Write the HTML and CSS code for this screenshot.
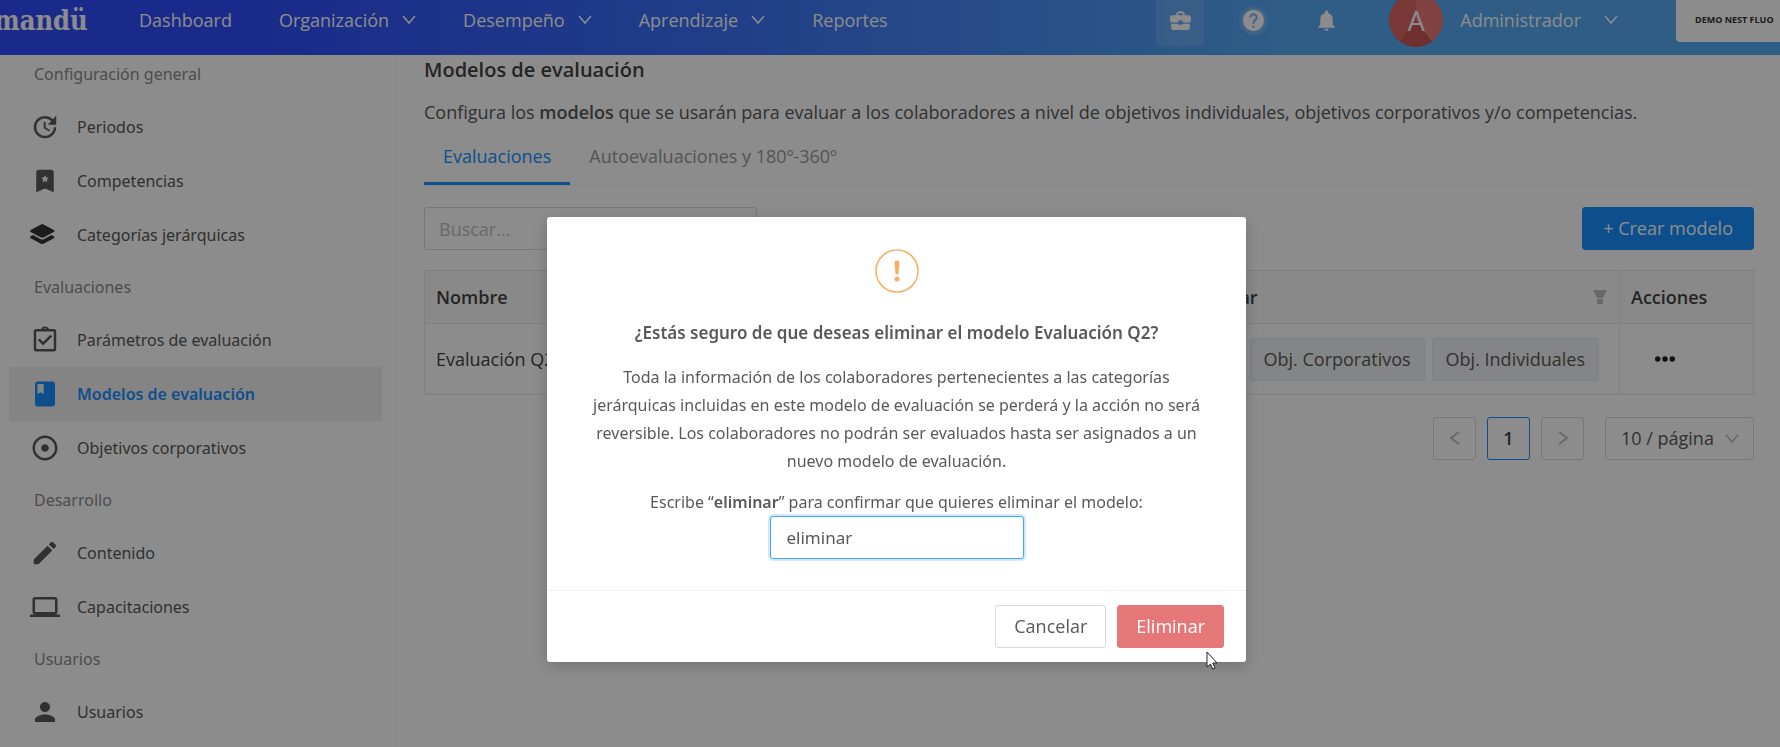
FILE: index.html
```html
<!DOCTYPE html>
<html lang="es">
<head>
  <meta charset="UTF-8">
  <title>Modelos de evaluación</title>
  <link rel="stylesheet" href="styles.css">
</head>
<body>
  <header class="header">
    <a href="#" class="logo">mandü</a>
    <nav class="nav">
      <a href="#">Dashboard</a>
      <a href="#">Organización <svg class="chevron" viewBox="0 0 14 10"><path d="M1 1l6 7 6-7"/></svg></a>
      <a href="#">Desempeño <svg class="chevron" viewBox="0 0 14 10"><path d="M1 1l6 7 6-7"/></svg></a>
      <a href="#">Aprendizaje <svg class="chevron" viewBox="0 0 14 10"><path d="M1 1l6 7 6-7"/></svg></a>
      <a href="#">Reportes</a>
    </nav>
    <div class="tools">
      <button type="button" class="tool tool-active" aria-label="Empresa">
        <svg viewBox="0 0 24 24"><path d="M10 16v-1H3v4c0 1.100.9 2 2 2h14c1.100 0 2-.9 2-2v-4h-7v1h-4zm10-9h-4V5l-2-2h-4L8 5v2H4c-1.100 0-2 .9-2 2v3c0 1.110.89 2 2 2h6v-2h4v2h6c1.100 0 2-.9 2-2V9c0-1.100-.9-2-2-2zm-6 0h-4V5h4v2z"/></svg>
      </button>
      <button type="button" class="tool" aria-label="Ayuda">
        <svg class="glow" viewBox="0 0 24 24"><path d="M12 2C6.480 2 2 6.480 2 12s4.480 10 10 10 10-4.480 10-10S17.520 2 12 2zm1 17h-2v-2h2v2zm2.070-7.750l-.9.920C13.450 12.900 13 13.500 13 15h-2v-.5c0-1.100.45-2.100 1.170-2.830l1.240-1.260c.37-.36.59-.86.59-1.410 0-1.100-.9-2-2-2s-2 .9-2 2H8c0-2.210 1.790-4 4-4s4 1.790 4 4c0 .88-.36 1.680-.93 2.250z"/></svg>
      </button>
      <button type="button" class="tool" aria-label="Notificaciones">
        <svg viewBox="0 0 24 24"><path d="M12 22c1.100 0 2-.9 2-2h-4c0 1.100.89 2 2 2zm6-6v-5c0-3.070-1.640-5.640-4.500-6.320V4c0-.83-.67-1.500-1.500-1.500s-1.500.67-1.500 1.500v.68C7.630 5.360 6 7.920 6 11v5l-2 2v1h16v-1l-2-2z"/></svg>
      </button>
    </div>
    <a href="#" class="user">
      <span class="avatar">A</span>
      <span>Administrador</span>
      <svg class="chevron" viewBox="0 0 14 10"><path d="M1 1l6 7 6-7"/></svg>
    </a>
    <div class="company">DEMO NEST FLUO</div>
  </header>

  <div class="layout">
    <aside class="sidebar">
      <h3>Configuración general</h3>
      <a href="#"><svg viewBox="0 0 24 24"><path d="M21 10.120h-6.780l2.740-2.820c-2.730-2.700-7.150-2.800-9.880-.1-2.730 2.710-2.730 7.080 0 9.790s7.150 2.710 9.880 0C18.320 15.650 19 14.080 19 12.100h2c0 1.980-.88 4.550-2.640 6.290-3.510 3.480-9.210 3.480-12.720 0-3.500-3.470-3.530-9.110-.02-12.580s9.140-3.470 12.650 0L21 3v7.120zM12.500 8v4.250l3.500 2.080-.72 1.210L11 13V8h1.500z"/></svg>Periodos</a>
      <a href="#"><svg viewBox="0 0 24 24"><path fill-rule="evenodd" d="M17 3H7c-1.100 0-2 .9-2 2v16l7-3 7 3V5c0-1.100-.9-2-2-2zM12 7.200l.9 2 2.200.2-1.700 1.500.5 2.100-1.900-1.100-1.900 1.100.5-2.100-1.700-1.500 2.200-.2z"/></svg>Competencias</a>
      <a href="#"><svg class="dark" viewBox="0 0 24 24"><path d="M8.800 1.500q1-.5 2 0l8.200 4.400q1.200.8 0 1.600l-8.200 4.400q-1 .5-2 0L.6 7.500q-1.200-.8 0-1.600zM.6 11l1.800-1 6.200 3.300q1.200.5 2.400 0l6.200-3.300 1.800 1q1.200.8 0 1.600l-8.200 4.300q-1 .5-2 0L.6 12.600q-1.200-.8 0-1.600z" transform="translate(0 2)"/></svg>Categorías jerárquicas</a>
      <h3>Evaluaciones</h3>
      <a href="#"><svg viewBox="0 0 24 24"><path d="M7 11.500l3.500 3.500L17 8.500M5 4.200h14q1 0 1 1v14q0 1-1 1H5q-1 0-1-1v-14q0-1 1-1z" fill="none" stroke="currentColor" stroke-width="2"/><path fill-rule="evenodd" d="M8.500 4.500C9 0 15 0 15.500 4.500zM12 2.500a.8.8 0 100 1.600.8.8 0 000-1.600z"/></svg>Parámetros de evaluación</a>
      <a href="#" class="active"><svg viewBox="0 0 24 24"><path fill-rule="evenodd" d="M18 2H6c-1.100 0-2 .9-2 2v16c0 1.100.9 2 2 2h12c1.100 0 2-.9 2-2V4c0-1.100-.9-2-2-2zM6 4h5v8l-2.500-1.500L6 12V4z"/></svg>Modelos de evaluación</a>
      <a href="#"><svg viewBox="0 0 24 24"><path d="M12 2C6.490 2 2 6.490 2 12s4.490 10 10 10 10-4.490 10-10S17.510 2 12 2zm0 18c-4.410 0-8-3.590-8-8s3.590-8 8-8 8 3.590 8 8-3.590 8-8 8zm3-8c0 1.660-1.340 3-3 3s-3-1.340-3-3 1.340-3 3-3 3 1.340 3 3z"/></svg>Objetivos corporativos</a>
      <h3>Desarrollo</h3>
      <a href="#"><svg viewBox="0 0 24 24"><path d="M3 17.250V21h3.750L17.810 9.940l-3.750-3.750L3 17.250zM20.710 7.040c.39-.39.39-1.020 0-1.410l-2.340-2.340c-.39-.39-1.020-.39-1.410 0l-1.830 1.830 3.750 3.750 1.830-1.830z"/></svg>Contenido</a>
      <a href="#"><svg viewBox="0 0 24 24"><path d="M20 18c1.100 0 2-.9 2-2V6c0-1.100-.9-2-2-2H4c-1.100 0-2 .9-2 2v10c0 1.100.9 2 2 2H0v2h24v-2h-4zM4 6h16v10H4V6z"/></svg>Capacitaciones</a>
      <h3>Usuarios</h3>
      <a href="#"><svg viewBox="0 0 24 24"><path d="M12 12c2.210 0 4-1.790 4-4s-1.790-4-4-4-4 1.790-4 4 1.790 4 4 4zm0 2c-2.670 0-8 1.340-8 4v2h16v-2c0-2.660-5.330-4-8-4z"/></svg>Usuarios</a>
    </aside>

    <main class="content">
      <h1>Modelos de evaluación</h1>
      <p class="description">Configura los <b>modelos</b> que se usarán para evaluar a los colaboradores a nivel de objetivos individuales, objetivos corporativos y/o competencias.</p>
      <div class="tabs">
        <a href="#" class="tab tab-active">Evaluaciones</a>
        <a href="#" class="tab">Autoevaluaciones y 180º-360º</a>
      </div>
      <div class="toolbar">
        <input type="text" class="search" placeholder="Buscar..." aria-label="Buscar">
        <button type="button" class="btn btn-primary">+ Crear modelo</button>
      </div>
      <table class="table">
        <thead>
          <tr>
            <th>Nombre</th>
            <th class="col-variables">
              <div class="th-filter">
                <span>Variables a evaluar</span>
                <svg viewBox="0 0 14 14"><path d="M0 0h14l-4 8H4zM4 9h6v5H4z"/></svg>
              </div>
            </th>
            <th class="col-actions">Acciones</th>
          </tr>
        </thead>
        <tbody>
          <tr>
            <td>Evaluación Q2</td>
            <td>
              <div class="tags">
                <span class="tag">Obj. Corporativos</span>
                <span class="tag">Obj. Individuales</span>
              </div>
            </td>
            <td>
              <button type="button" class="more" aria-label="Más acciones">
                <svg viewBox="0 0 22 6"><circle cx="3" cy="3" r="3"/><circle cx="11" cy="3" r="3"/><circle cx="19" cy="3" r="3"/></svg>
              </button>
            </td>
          </tr>
        </tbody>
      </table>
      <div class="pagination">
        <button type="button" class="page" aria-label="Anterior"><svg viewBox="0 0 10 14"><path d="M9 1L1 7l8 6"/></svg></button>
        <button type="button" class="page page-active">1</button>
        <button type="button" class="page" aria-label="Siguiente"><svg viewBox="0 0 10 14"><path d="M1 1l8 6-8 6"/></svg></button>
        <div class="page-size">
          <select aria-label="Resultados por página">
            <option>10 / página</option>
          </select>
          <svg class="chevron" viewBox="0 0 14 10"><path d="M1 1l6 7 6-7"/></svg>
        </div>
      </div>
    </main>
  </div>

  <div class="overlay">
    <form class="modal" role="dialog" aria-modal="true" aria-labelledby="modal-title">
      <div class="modal-body">
        <svg class="warning" viewBox="0 0 44 44"><circle cx="22" cy="22" r="21"/><path d="M19.500 13.500q0-2 2.500-2t2.500 2l-1 11q-.2 1-1.500 1t-1.500-1z"/><path d="M22 27.500a2.500 2.500 0 100 5 2.500 2.500 0 000-5z"/></svg>
        <h2 id="modal-title">¿Estás seguro de que deseas eliminar el modelo Evaluación Q2?</h2>
        <p>Toda la información de los colaboradores pertenecientes a las categorías jerárquicas incluidas en este modelo de evaluación se perderá y la acción no será reversible. Los colaboradores no podrán ser evaluados hasta ser asignados a un nuevo modelo de evaluación.</p>
        <label for="confirm">Escribe “<b>eliminar</b>” para confirmar que quieres eliminar el modelo:</label>
        <input type="text" id="confirm" class="confirm" value="eliminar">
      </div>
      <div class="modal-footer">
        <button type="button" class="btn">Cancelar</button>
        <button type="submit" class="btn btn-danger">Eliminar</button>
      </div>
      <svg class="cursor" viewBox="0 0 12 19"><path d="M1 1v15l3.500-3 2.200 5 2.300-1-2.200-5H11z"/></svg>
    </form>
  </div>
</body>
</html>
```

FILE: styles.css
```css
* {
  box-sizing: border-box;
}
body {
  margin: 0;
  height: 100vh;
  overflow: hidden;
  font-family: "Open Sans", "Noto Sans", sans-serif;
  font-size: 18px;
  line-height: 27px;
  color: #595959;
  background: #fff;
}
a {
  color: inherit;
  text-decoration: none;
}
button, input, select {
  font: inherit;
  color: inherit;
}
button {
  cursor: pointer;
}
svg {
  fill: currentColor;
  flex: none;
}
b {
  font-weight: 600;
}
.chevron {
  width: 14px;
  height: 10px;
  fill: none;
  stroke: currentColor;
  stroke-width: 1.5;
}

/* header */
.header {
  display: flex;
  align-items: center;
  height: 55px;
  padding-bottom: 15px;
  color: #fff;
  background: linear-gradient(90deg, #304efb 0%, #304efb 15%, #3c74f8 42%, #56a9f5 72%, #56a9f5 100%);
}
.logo {
  width: 138px;
  margin-left: -6px;
  font-family: "DejaVu Serif Condensed", "DejaVu Serif", serif;
  font-size: 27px;
  font-weight: bold;
}
.nav {
  display: flex;
  flex: 1;
  gap: 47px;
  padding-left: 7px;
}
.nav a {
  display: flex;
  align-items: center;
  gap: 13px;
}
.tools {
  display: flex;
  gap: 25px;
}
.tool {
  display: flex;
  align-items: center;
  justify-content: center;
  width: 48px;
  height: 52px;
  padding: 0;
  border: none;
  border-radius: 4px;
  background: none;
}
.tool-active {
  background: rgba(255, 255, 255, 0.12);
}
.tool svg {
  width: 25px;
  height: 25px;
}
.glow {
  border-radius: 50%;
  background: rgba(255, 255, 255, 0.2);
  box-shadow: 0 0 4px rgba(255, 255, 255, 0.4);
}
.user {
  display: flex;
  align-items: center;
  gap: 17px;
  margin: 0 58px 0 39px;
}
.user .chevron {
  margin-left: 6px;
}
.avatar {
  display: flex;
  align-items: center;
  justify-content: center;
  width: 54px;
  height: 54px;
  border-radius: 50%;
  font-size: 27px;
  background: conic-gradient(#ea7a78 0 40%, #c85652 40% 60%, #dd6763 60% 100%);
}
.company {
  width: 104px;
  height: 44px;
  padding-left: 19px;
  border-radius: 4px 0 0 4px;
  font-size: 9px;
  font-weight: 700;
  line-height: 44px;
  white-space: nowrap;
  color: #333;
  background: #fff;
}

/* sidebar */
.layout {
  display: flex;
  min-height: calc(100vh - 55px);
}
.sidebar {
  width: 397px;
  padding: 0 14px 0 9px;
  font-family: "Noto Sans", sans-serif;
  font-size: 16px;
  border-right: 1px solid #f0f0f0;
}
.sidebar h3 {
  margin: 0;
  padding: 12px 25px;
  font-size: 16px;
  font-weight: 400;
  color: #8c8c8c;
}
.sidebar h3:first-child {
  padding-top: 6px;
}
.sidebar a {
  display: flex;
  align-items: center;
  gap: 17px;
  height: 54px;
  padding-left: 21px;
}
.sidebar svg {
  width: 30px;
  height: 30px;
}
.sidebar .dark {
  color: #333;
}
.sidebar .active {
  font-weight: 600;
  color: #1890ff;
  background: #f0f0f0;
}

/* content */
.content {
  flex: 1;
  padding: 1px 26px 0 27px;
}
h1 {
  margin: 0;
  font-size: 20px;
  font-weight: 600;
  color: #434343;
}
.description {
  margin: 16px 0 7px;
}
.tabs {
  display: flex;
  border-bottom: 1px solid #f0f0f0;
}
.tab {
  padding: 10px 19px 12px;
  color: #999;
}
.tab-active {
  color: #1890ff;
  border-bottom: 3px solid #1890ff;
}
.toolbar {
  display: flex;
  justify-content: space-between;
  margin: 21px 0 20px;
}
.search {
  width: 333px;
  height: 43px;
  padding: 0 14px;
  border: 1px solid #d9d9d9;
  border-radius: 3px;
  background: #fff;
}
.search::placeholder {
  color: #bfbfbf;
}
.btn {
  height: 43px;
  padding: 0 18px;
  border: 1px solid #d9d9d9;
  border-radius: 3px;
  background: #fff;
}
.btn-primary {
  padding: 0 20px;
  color: #fff;
  border-color: #1890ff;
  background: #1890ff;
}
.btn-danger {
  color: #fff;
  border-color: #e57779;
  background: #e57779;
}
.table {
  width: 100%;
  table-layout: fixed;
  border: 1px solid #e8e8e8;
  border-collapse: collapse;
}
.table th {
  height: 53px;
  padding: 0 12px 0 11px;
  text-align: left;
  font-weight: 600;
  color: #434343;
  background: #fafafa;
  border-bottom: 1px solid #e8e8e8;
}
.table td {
  height: 71px;
  padding: 0 12px 0 11px;
  color: #434343;
}
.table .col-variables {
  width: 538px;
}
.table .col-actions {
  width: 134px;
}
.table th:last-child, .table td:last-child {
  border-left: 1px solid #e8e8e8;
}
.th-filter {
  display: flex;
  align-items: center;
  justify-content: space-between;
}
.th-filter svg {
  width: 14px;
  height: 14px;
  color: #bfbfbf;
}
.tags {
  display: flex;
  justify-content: flex-end;
  gap: 7px;
  padding-right: 8px;
}
.tag {
  padding: 7px 13px;
  border: 1px solid #e4e7f0;
  border-radius: 3px;
  color: #595959;
  background: #f0f2f5;
}
.more {
  display: flex;
  padding: 0 24px;
  border: none;
  color: #222;
  background: none;
}
.more svg {
  width: 20px;
  height: 6px;
}
.pagination {
  display: flex;
  justify-content: flex-end;
  gap: 11px;
  margin-top: 22px;
}
.page {
  width: 43px;
  height: 43px;
  padding: 0;
  border: 1px solid #d9d9d9;
  border-radius: 3px;
  background: #fff;
}
.page svg {
  width: 10px;
  height: 14px;
  fill: none;
  stroke: #bfbfbf;
  stroke-width: 2;
}
.page-active {
  font-weight: 600;
  color: #434343;
  border-color: #1890ff;
}
.page-size {
  position: relative;
  margin-left: 10px;
}
.page-size select {
  appearance: none;
  width: 149px;
  height: 43px;
  padding: 0 15px;
  border: 1px solid #d9d9d9;
  border-radius: 3px;
  background: #fff;
}
.page-size .chevron {
  position: absolute;
  top: 17px;
  right: 15px;
  color: #bfbfbf;
  pointer-events: none;
}

/* modal */
.overlay {
  position: fixed;
  inset: 0;
  display: flex;
  align-items: flex-start;
  justify-content: center;
  padding: 217px 0 0 13px;
  background: rgba(0, 0, 0, 0.45);
}
.modal {
  position: relative;
  width: 699px;
  border-radius: 3px;
  background: #fff;
  box-shadow: 0 4px 16px rgba(0, 0, 0, 0.2);
}
.modal-body {
  display: flex;
  flex-direction: column;
  align-items: center;
  padding: 32px 36px 31px;
  font-family: "Noto Sans", sans-serif;
  font-size: 16px;
  line-height: 28px;
  text-align: center;
}
.warning {
  width: 44px;
  height: 44px;
  color: #faad61;
}
.warning circle {
  fill: none;
  stroke: currentColor;
  stroke-width: 1.5;
}
h2 {
  margin: 26px 0 16px;
  font-size: 17px;
  font-weight: 600;
}
.modal-body p {
  margin: 0 0 13px;
}
.confirm {
  width: 254px;
  height: 43px;
  padding: 0 16px;
  border: 1px solid #40a9ff;
  border-radius: 3px;
  outline: none;
  font-size: 17px;
  box-shadow: 0 0 0 2px rgba(24, 144, 255, 0.2);
}
.modal-footer {
  display: flex;
  justify-content: flex-end;
  gap: 11px;
  padding: 14px 22px;
  border-top: 1px solid #f0f0f0;
}
.cursor {
  position: absolute;
  right: 28px;
  bottom: -8px;
  width: 12px;
  height: 19px;
  fill: #fff;
  stroke: #222;
}
```
